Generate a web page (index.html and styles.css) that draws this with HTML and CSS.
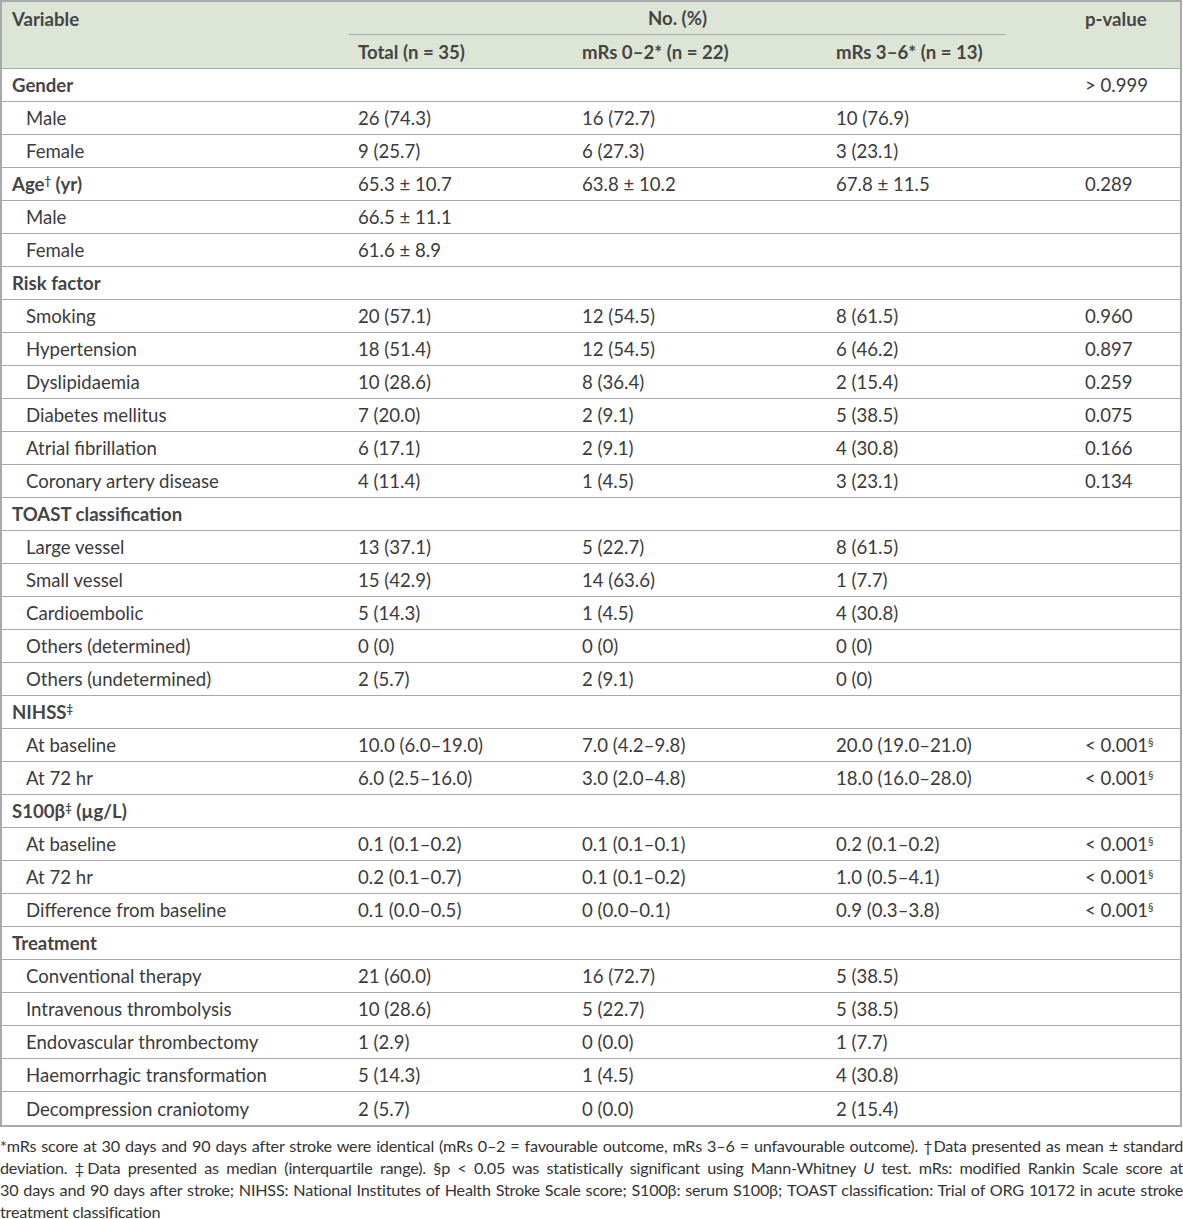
FILE: index.html
```html
<!DOCTYPE html>
<html>
<head>
<meta charset="utf-8">
<link rel="stylesheet" href="styles.css">
</head>
<body>
<table class="data">
  <colgroup>
    <col class="c1"><col class="c2"><col class="c3"><col class="c4"><col class="c5">
  </colgroup>
  <thead>
    <tr class="h1">
      <th rowspan="2" class="var">Variable</th>
      <th colspan="3" class="group">No. (%)</th>
      <th rowspan="2" class="pv">p-value</th>
    </tr>
    <tr class="h2">
      <th class="sub">Total (n = 35)</th>
      <th class="sub">mRs 0–2* (n = 22)</th>
      <th class="sub">mRs 3–6* (n = 13)</th>
    </tr>
  </thead>
  <tbody>
    <tr class="cat"><td>Gender</td><td></td><td></td><td></td><td class="p">&gt; 0.999</td></tr>
    <tr><td class="item">Male</td><td>26 (74.3)</td><td>16 (72.7)</td><td>10 (76.9)</td><td class="p"></td></tr>
    <tr><td class="item">Female</td><td>9 (25.7)</td><td>6 (27.3)</td><td>3 (23.1)</td><td class="p"></td></tr>
    <tr class="cat"><td>Age<sup>†</sup> (yr)</td><td>65.3 ± 10.7</td><td>63.8 ± 10.2</td><td>67.8 ± 11.5</td><td class="p">0.289</td></tr>
    <tr><td class="item">Male</td><td>66.5 ± 11.1</td><td></td><td></td><td class="p"></td></tr>
    <tr><td class="item">Female</td><td>61.6 ± 8.9</td><td></td><td></td><td class="p"></td></tr>
    <tr class="cat"><td>Risk factor</td><td></td><td></td><td></td><td class="p"></td></tr>
    <tr><td class="item">Smoking</td><td>20 (57.1)</td><td>12 (54.5)</td><td>8 (61.5)</td><td class="p">0.960</td></tr>
    <tr><td class="item">Hypertension</td><td>18 (51.4)</td><td>12 (54.5)</td><td>6 (46.2)</td><td class="p">0.897</td></tr>
    <tr><td class="item">Dyslipidaemia</td><td>10 (28.6)</td><td>8 (36.4)</td><td>2 (15.4)</td><td class="p">0.259</td></tr>
    <tr><td class="item">Diabetes mellitus</td><td>7 (20.0)</td><td>2 (9.1)</td><td>5 (38.5)</td><td class="p">0.075</td></tr>
    <tr><td class="item">Atrial fibrillation</td><td>6 (17.1)</td><td>2 (9.1)</td><td>4 (30.8)</td><td class="p">0.166</td></tr>
    <tr><td class="item">Coronary artery disease</td><td>4 (11.4)</td><td>1 (4.5)</td><td>3 (23.1)</td><td class="p">0.134</td></tr>
    <tr class="cat"><td>TOAST classification</td><td></td><td></td><td></td><td class="p"></td></tr>
    <tr><td class="item">Large vessel</td><td>13 (37.1)</td><td>5 (22.7)</td><td>8 (61.5)</td><td class="p"></td></tr>
    <tr><td class="item">Small vessel</td><td>15 (42.9)</td><td>14 (63.6)</td><td>1 (7.7)</td><td class="p"></td></tr>
    <tr><td class="item">Cardioembolic</td><td>5 (14.3)</td><td>1 (4.5)</td><td>4 (30.8)</td><td class="p"></td></tr>
    <tr><td class="item">Others (determined)</td><td>0 (0)</td><td>0 (0)</td><td>0 (0)</td><td class="p"></td></tr>
    <tr><td class="item">Others (undetermined)</td><td>2 (5.7)</td><td>2 (9.1)</td><td>0 (0)</td><td class="p"></td></tr>
    <tr class="cat"><td>NIHSS<sup>‡</sup></td><td></td><td></td><td></td><td class="p"></td></tr>
    <tr><td class="item">At baseline</td><td>10.0 (6.0–19.0)</td><td>7.0 (4.2–9.8)</td><td>20.0 (19.0–21.0)</td><td class="p">&lt; 0.001<sup>§</sup></td></tr>
    <tr><td class="item">At 72 hr</td><td>6.0 (2.5–16.0)</td><td>3.0 (2.0–4.8)</td><td>18.0 (16.0–28.0)</td><td class="p">&lt; 0.001<sup>§</sup></td></tr>
    <tr class="cat"><td>S100β<sup>‡</sup> (µg/L)</td><td></td><td></td><td></td><td class="p"></td></tr>
    <tr><td class="item">At baseline</td><td>0.1 (0.1–0.2)</td><td>0.1 (0.1–0.1)</td><td>0.2 (0.1–0.2)</td><td class="p">&lt; 0.001<sup>§</sup></td></tr>
    <tr><td class="item">At 72 hr</td><td>0.2 (0.1–0.7)</td><td>0.1 (0.1–0.2)</td><td>1.0 (0.5–4.1)</td><td class="p">&lt; 0.001<sup>§</sup></td></tr>
    <tr><td class="item">Difference from baseline</td><td>0.1 (0.0–0.5)</td><td>0 (0.0–0.1)</td><td>0.9 (0.3–3.8)</td><td class="p">&lt; 0.001<sup>§</sup></td></tr>
    <tr class="cat"><td>Treatment</td><td></td><td></td><td></td><td class="p"></td></tr>
    <tr><td class="item">Conventional therapy</td><td>21 (60.0)</td><td>16 (72.7)</td><td>5 (38.5)</td><td class="p"></td></tr>
    <tr><td class="item">Intravenous thrombolysis</td><td>10 (28.6)</td><td>5 (22.7)</td><td>5 (38.5)</td><td class="p"></td></tr>
    <tr><td class="item">Endovascular thrombectomy</td><td>1 (2.9)</td><td>0 (0.0)</td><td>1 (7.7)</td><td class="p"></td></tr>
    <tr><td class="item">Haemorrhagic transformation</td><td>5 (14.3)</td><td>1 (4.5)</td><td>4 (30.8)</td><td class="p"></td></tr>
    <tr class="last"><td class="item">Decompression craniotomy</td><td>2 (5.7)</td><td>0 (0.0)</td><td>2 (15.4)</td><td class="p"></td></tr>
  </tbody>
</table>
<p class="notes"><span class="ln">*mRs score at 30 days and 90 days after stroke were identical (mRs 0–2 = favourable outcome, mRs 3–6 = unfavourable outcome). †Data presented as mean ± standard</span>
<span class="ln">deviation. ‡Data presented as median (interquartile range). §p &lt; 0.05 was statistically significant using Mann-Whitney <i>U</i> test. mRs: modified Rankin Scale score at</span>
<span class="ln">30 days and 90 days after stroke; NIHSS: National Institutes of Health Stroke Scale score; S100β: serum S100β; TOAST classification: Trial of ORG 10172 in acute stroke</span>
<span class="ln end">treatment classification</span></p>
</body>
</html>
```

FILE: styles.css
```css
html, body {
  margin: 0;
  padding: 0;
  background: #ffffff;
}
body {
  width: 1183px;
  font-family: Lato, "Liberation Sans", sans-serif;
  color: #3b3b3b;
}
.data {
  width: 1182px;
  table-layout: fixed;
  border-collapse: separate;
  border-spacing: 0;
  border: 2px solid #a7a9aa;
  font-size: 18.6px;
}
.c1 { width: 347px; }
.c2 { width: 224px; }
.c3 { width: 254px; }
.c4 { width: 179px; }
.c5 { width: 174px; }

.data th {
  background: #dde5d7;
  color: #454545;
  font-weight: 700;
  text-align: left;
  padding: 0 0 0 9px;
  height: 32px;
  line-height: 22px;
  vertical-align: middle;
}
.data th.var {
  padding-left: 10px;
  vertical-align: top;
  padding-top: 6px;
  border-bottom: 1px solid #a7a9aa;
}
.data th.pv {
  padding-left: 79px;
  vertical-align: top;
  padding-top: 6px;
  border-bottom: 1px solid #a7a9aa;
}
.data th.group {
  text-align: center;
  padding: 0;
  border-bottom: 1px solid #a7a9aa;
}
.data th.sub {
  height: 33px;
  border-bottom: 1px solid #a7a9aa;
}
.data td {
  height: 32px;
  padding: 0 0 0 9px;
  line-height: 22px;
  border-bottom: 1px solid #a7a9aa;
  white-space: nowrap;
  vertical-align: middle;
}
.data tr.last td {
  border-bottom: none;
  height: 33px;
}
.data td:first-child {
  padding-left: 10px;
}
.data td.item {
  padding-left: 24px;
}
.data tr.cat td:first-child {
  font-weight: 700;
  color: #454545;
}
.data td.p {
  padding-left: 79px;
}
sup {
  font-size: 0.6em;
  line-height: 0;
  vertical-align: 0.55em;
}
.notes {
  margin: 8px 0 0 0;
  font-size: 16.2px;
  line-height: 22px;
  color: #333333;
  letter-spacing: -0.2px;
}
.ln {
  display: block;
  white-space: nowrap;
  text-align: justify;
  text-align-last: justify;
}
.ln.end {
  text-align-last: left;
}
```
